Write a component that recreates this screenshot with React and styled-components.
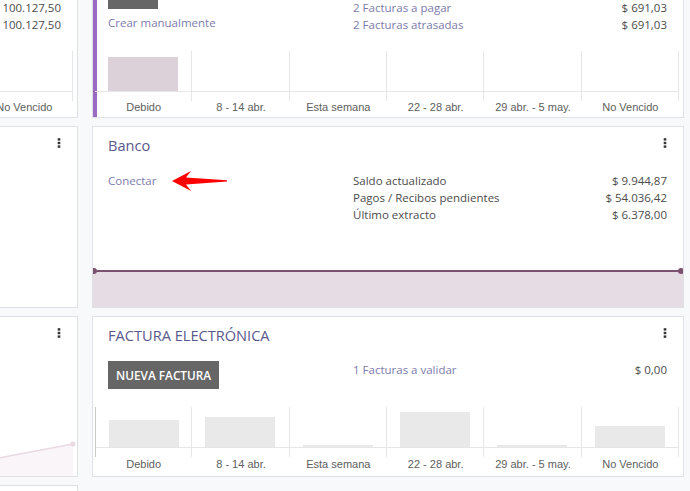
import React from "react";
import styled, { createGlobalStyle, css } from "styled-components";

const GlobalStyle = createGlobalStyle`
  html, body {
    margin: 0;
    padding: 0;
    background: #f8f9fa;
    overflow: hidden;
    font-family: "Open Sans", "Noto Sans", sans-serif;
  }
`;

const LABELS = [
  "Debido",
  "8 - 14 abr.",
  "Esta semana",
  "22 - 28 abr.",
  "29 abr. - 5 may.",
  "No Vencido",
];

const Board = styled.div`
  display: grid;
  grid-template-columns: 592px 592px;
  column-gap: 14px;
  row-gap: 8px;
  margin: -64px 0 0 -514px;
`;

const Card = styled.div`
  display: flex;
  flex-direction: column;
  background: #fff;
  border: 1px solid #dee2e6;
  padding-bottom: ${(p) => p.$pad || 0}px;
  min-height: ${(p) => p.$min || 0}px;

  ${(p) =>
    p.$accent &&
    css`
      box-shadow: inset 4px 0 0 #9a6cc1;
    `}
`;

const CardHeader = styled.div`
  display: flex;
  justify-content: space-between;
  align-items: flex-start;
  padding: 8px 16px 16px 15px;
`;

const Title = styled.div`
  font-size: 14.6px;
  line-height: 20px;
  color: #5a598c;
`;

const Kebab = () => (
  <svg width="4" height="10" viewBox="0 0 4 10" style={{ marginTop: 3 }}>
    <rect x="0.7" y="0.2" width="2.6" height="2.4" fill="#333" />
    <rect x="0.7" y="3.8" width="2.6" height="2.4" fill="#333" />
    <rect x="0.7" y="7.4" width="2.6" height="2.4" fill="#333" />
  </svg>
);

const CardBody = styled.div`
  display: grid;
  grid-template-columns: 245px 1fr;
  padding: 0 16px 0 15px;
  font-size: 11.5px;
  line-height: 17px;
  color: #4c4c4c;
`;

const LeftCol = styled.div`
  display: flex;
  flex-direction: column;
  align-items: flex-start;
`;

const StatList = styled.div`
  display: flex;
  flex-direction: column;
  padding-top: ${(p) => p.$offset || 0}px;
`;

const StatRow = styled.div`
  display: flex;
  justify-content: space-between;
  height: 17px;
`;

const Link = styled.a`
  color: #7c7bad;
  text-decoration: none;
  cursor: pointer;
  margin-top: ${(p) => p.$gap || 0}px;
`;

const ActionButton = styled.button`
  height: 28px;
  padding: 0 8px;
  border: none;
  border-radius: 0;
  background: #666666;
  color: #fff;
  font-family: "Open Sans", sans-serif;
  font-size: 11.8px;
  font-weight: 600;
  text-transform: uppercase;
`;

const ConnectRow = styled.div`
  display: flex;
  align-items: center;
  height: 17px;
  margin-top: 1px;
`;

const Arrow = () => (
  <svg width="58" height="22" viewBox="0 0 58 22" style={{ marginLeft: 15 }}>
    <path
      d="M1 11 L20 1 L15 7.6 L56 10.2 L56 11.4 L15 14.4 L20 21 Z"
      fill="#ff0000"
    />
  </svg>
);

const Chart = styled.div`
  margin: 18px 4px 0 2px;
`;

const ChartGrid = styled.div`
  display: grid;
  grid-template-columns: repeat(6, 1fr);
`;

const ChartColumn = styled.div`
  display: flex;
  flex-direction: column;
  border-right: 1px solid #e6e6e6;

  ${(p) =>
    p.$axis &&
    css`
      border-left: 1px solid #c9c9c9;
    `}
`;

const Plot = styled.div`
  height: 40px;
  display: flex;
  align-items: flex-end;
  justify-content: center;
  border-bottom: 1px solid #e6e6e6;
`;

const Bar = styled.div`
  width: 70px;
  height: ${(p) => p.$h}px;
  background: ${(p) => p.$color};
`;

const Tick = styled.div`
  height: 9px;
`;

const ChartLabel = styled.div`
  text-align: center;
  font-family: "Liberation Sans", Arial, sans-serif;
  font-size: 11px;
  line-height: ${(p) => p.$lh || 14}px;
  color: #5e5e5e;
`;

const BarChart = ({ bars, color, axis, lh }) => (
  <Chart>
    <ChartGrid>
      {LABELS.map((l, i) => (
        <ChartColumn key={l} $axis={axis && i === 0}>
          <Plot>{bars[i] > 0 && <Bar $h={bars[i]} $color={color} />}</Plot>
          <Tick />
        </ChartColumn>
      ))}
    </ChartGrid>
    <ChartGrid>
      {LABELS.map((l) => (
        <ChartLabel key={l} $lh={lh}>
          {l}
        </ChartLabel>
      ))}
    </ChartGrid>
  </Chart>
);

const Spacer = styled.div`
  flex: 1;
`;

const BankGraph = styled.svg`
  display: block;
  flex: none;
`;

const SalesGraph = styled.svg`
  display: block;
  flex: none;
`;

export default function App() {
  return (
    <>
      <GlobalStyle />
      <Board>
        {/* row 1 */}
        <Card $pad={4}>
          <CardHeader>
            <Title>Facturas de clientes</Title>
            <Kebab />
          </CardHeader>
          <CardBody>
            <LeftCol>
              <ActionButton>Nueva factura</ActionButton>
            </LeftCol>
            <StatList $offset={1}>
              <StatRow>
                <Link>3 Facturas a validar</Link>
                <span>$ 12.480,00</span>
              </StatRow>
              <StatRow>
                <Link>14 Facturas sin pagar</Link>
                <span>$ 100.127,50</span>
              </StatRow>
              <StatRow>
                <Link>14 Facturas atrasadas</Link>
                <span>$ 100.127,50</span>
              </StatRow>
            </StatList>
          </CardBody>
          <BarChart bars={[36, 12, 0, 0, 0, 0]} color="#dcd1d9" lh={12} />
        </Card>

        <Card $pad={4} $accent>
          <CardHeader>
            <Title>Facturas de proveedores</Title>
            <Kebab />
          </CardHeader>
          <CardBody>
            <LeftCol>
              <ActionButton>Subir</ActionButton>
              <Link $gap={5}>Crear manualmente</Link>
            </LeftCol>
            <StatList $offset={1}>
              <StatRow>
                <Link>1 Facturas a validar</Link>
                <span>$ 0,00</span>
              </StatRow>
              <StatRow>
                <Link>2 Facturas a pagar</Link>
                <span>$ 691,03</span>
              </StatRow>
              <StatRow>
                <Link>2 Facturas atrasadas</Link>
                <span>$ 691,03</span>
              </StatRow>
            </StatList>
          </CardBody>
          <BarChart bars={[34, 0, 0, 0, 0, 0]} color="#dcd1d9" lh={12} />
        </Card>

        {/* row 2 */}
        <Card>
          <CardHeader>
            <Title>Efectivo</Title>
            <Kebab />
          </CardHeader>
          <CardBody>
            <LeftCol>
              <Link>Nueva transacción</Link>
            </LeftCol>
          </CardBody>
        </Card>

        <Card $min={180}>
          <CardHeader>
            <Title>Banco</Title>
            <Kebab />
          </CardHeader>
          <CardBody>
            <LeftCol>
              <ConnectRow>
                <Link>Conectar</Link>
                <Arrow />
              </ConnectRow>
            </LeftCol>
            <StatList $offset={1}>
              <StatRow>
                <span>Saldo actualizado</span>
                <span>$ 9.944,87</span>
              </StatRow>
              <StatRow>
                <span>Pagos / Recibos pendientes</span>
                <span>$ 54.036,42</span>
              </StatRow>
              <StatRow>
                <span>Último extracto</span>
                <span>$ 6.378,00</span>
              </StatRow>
            </StatList>
          </CardBody>
          <Spacer />
          <BankGraph width="590" height="40" viewBox="0 0 590 40">
            <rect x="0" y="4" width="590" height="36" fill="#e6dde4" />
            <line x1="0" y1="4" x2="590" y2="4" stroke="#7d5271" strokeWidth="2" />
            <circle cx="1" cy="4" r="3" fill="#7d5271" />
            <circle cx="588" cy="4" r="3" fill="#7d5271" />
          </BankGraph>
        </Card>

        {/* row 3 */}
        <Card>
          <CardHeader>
            <Title>Ventas</Title>
            <Kebab />
          </CardHeader>
          <Spacer />
          <SalesGraph width="590" height="60" viewBox="0 0 590 60">
            <polygon
              points="4,40 100,50 200,35 300,45 400,50 490,46 586,28 586,60 4,60"
              fill="#faf5f8"
            />
            <polyline
              points="4,40 100,50 200,35 300,45 400,50 490,46 586,28"
              fill="none"
              stroke="#ead9e3"
              strokeWidth="1.5"
            />
            <circle cx="586" cy="28" r="2.5" fill="#ead9e3" />
          </SalesGraph>
        </Card>

        <Card $pad={5}>
          <CardHeader>
            <Title>FACTURA ELECTRÓNICA</Title>
            <Kebab />
          </CardHeader>
          <CardBody>
            <LeftCol>
              <ActionButton>Nueva factura</ActionButton>
            </LeftCol>
            <StatList>
              <StatRow>
                <Link>1 Facturas a validar</Link>
                <span>$ 0,00</span>
              </StatRow>
            </StatList>
          </CardBody>
          <BarChart bars={[27, 30, 2, 35, 2, 21]} color="#e9e9e9" axis />
        </Card>

        {/* row 4 */}
        <Card $min={60}>
          <CardHeader>
            <Title>Misceláneos</Title>
            <Kebab />
          </CardHeader>
        </Card>
      </Board>
    </>
  );
}
